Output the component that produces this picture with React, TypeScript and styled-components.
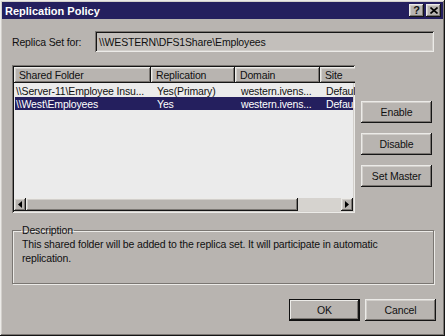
import styled, { createGlobalStyle, css } from "styled-components";

const GlobalStyle = createGlobalStyle`
  html, body {
    margin: 0;
    padding: 0;
    background: #b8b4b0;
  }
  body {
    font-family: "Liberation Sans", Arial, sans-serif;
    font-size: 10.5px;
    letter-spacing: -0.15px;
    color: #101010;
  }
`;

const raised = css`
  box-shadow: inset -1px -1px #151515, inset 1px 1px #ecebe8,
    inset -2px -2px #7a7672, inset 2px 2px #d2cfcb;
`;

const sunken = css`
  box-shadow: inset 1px 1px #7a7672, inset -1px -1px #ecebe8,
    inset 2px 2px #151515, inset -2px -2px #d2cfcb;
`;

const Window = styled.div`
  width: 445px;
  height: 336px;
  box-sizing: border-box;
  padding: 2px;
  background: #b8b4b0;
  display: flex;
  flex-direction: column;
  ${raised};
`;

const TitleBar = styled.div`
  height: 17px;
  background: #241f5e;
  display: flex;
  align-items: center;
  padding: 0 2px 0 3px;
`;

const Title = styled.div`
  flex: 1;
  color: #fff;
  font-weight: bold;
  font-size: 11px;
  letter-spacing: 0;
`;

const CaptionButton = styled.div`
  width: 15px;
  height: 13px;
  margin-left: 2px;
  background: #b8b4b0;
  display: flex;
  align-items: center;
  justify-content: center;
  font-weight: bold;
  font-size: 11px;
  letter-spacing: 0;
  line-height: 1;
  ${raised};
`;

const Body = styled.div`
  flex: 1;
  display: flex;
  flex-direction: column;
  padding: 12px 9px 0 10px;
`;

const FieldRow = styled.div`
  display: flex;
  align-items: center;
  height: 21px;
`;

const Label = styled.div`
  width: 83px;
`;

const ReadOnlyField = styled.div`
  flex: 1;
  height: 21px;
  box-sizing: border-box;
  padding: 0 4px;
  display: flex;
  align-items: center;
  background: #c3bfbb;
  ${sunken};
`;

const Middle = styled.div`
  display: flex;
  margin-top: 13px;
  gap: 6px;
`;

const List = styled.div`
  width: 343px;
  height: 148px;
  box-sizing: border-box;
  padding: 2px;
  background: #ebebeb;
  display: flex;
  flex-direction: column;
  overflow: hidden;
  ${sunken};
`;

const HeaderRow = styled.div`
  display: flex;
  height: 16px;
  flex-shrink: 0;
`;

const HeaderCell = styled.div<{ w: number }>`
  width: ${(p) => p.w}px;
  flex-shrink: 0;
  box-sizing: border-box;
  padding: 0 5px;
  display: flex;
  align-items: center;
  background: #b8b4b0;
  white-space: nowrap;
  overflow: hidden;
  ${raised};
`;

const Rows = styled.div`
  flex: 1;
  padding-top: 1px;
`;

const Row = styled.div<{ selected?: boolean }>`
  display: flex;
  height: 13px;
  align-items: center;
  margin-left: 1px;
  background: ${(p) => (p.selected ? "#241f5e" : "transparent")};
  color: ${(p) => (p.selected ? "#fff" : "#101010")};
`;

const Cell = styled.div<{ w: number; first?: boolean }>`
  width: ${(p) => p.w}px;
  flex-shrink: 0;
  box-sizing: border-box;
  padding: 0 2px 0 ${(p) => (p.first ? 1 : 6)}px;
  white-space: nowrap;
  overflow: hidden;
`;

const ScrollBar = styled.div`
  height: 13px;
  display: flex;
  flex-shrink: 0;
  background: #d6d3cf;
`;

const ArrowButton = styled.div`
  width: 12px;
  height: 13px;
  background: #b8b4b0;
  display: flex;
  align-items: center;
  justify-content: center;
  ${raised};
`;

const Thumb = styled.div`
  width: 272px;
  height: 13px;
  background: #b8b4b0;
  ${raised};
`;

const Track = styled.div`
  flex: 1;
`;

const SideButtons = styled.div`
  display: flex;
  flex-direction: column;
  gap: 10px;
  padding-top: 36px;
`;

const Button = styled.button<{ isDefault?: boolean }>`
  width: 71px;
  height: 22px;
  border: none;
  padding: 0;
  font: inherit;
  letter-spacing: inherit;
  color: #101010;
  background: #b8b4b0;
  ${(p) =>
    p.isDefault
      ? css`
          box-shadow: inset 0 0 0 1px #101010, inset -2px -2px #151515,
            inset 2px 2px #ecebe8, inset -3px -3px #7a7672;
        `
      : raised};
`;

const GroupBox = styled.fieldset`
  margin: 11px 0 0 0;
  height: 60px;
  box-sizing: border-box;
  padding: 0 8px 0 9px;
  border: 1px solid #7a7672;
  box-shadow: 1px 1px #ecebe8, inset 1px 1px #ecebe8;
`;

const Legend = styled.legend`
  padding: 0 1px;
  margin-left: -1px;
`;

const Description = styled.p`
  margin: 1px 0 0 0;
  width: 360px;
  line-height: 14px;
`;

const Footer = styled.div`
  display: flex;
  justify-content: flex-end;
  gap: 5px;
  margin-top: 15px;
  margin-right: -2px;
`;

const columns = [137, 84, 85, 60];

const data = [
  ["\\\\Server-11\\Employee Insu...", "Yes(Primary)", "western.ivens...", "Default"],
  ["\\\\West\\Employees", "Yes", "western.ivens...", "Default"],
];

export default function App() {
  return (
    <>
      <GlobalStyle />
      <Window>
        <TitleBar>
          <Title>Replication Policy</Title>
          <CaptionButton>?</CaptionButton>
          <CaptionButton>
            <svg width="8" height="7" viewBox="0 0 8 7">
              <path d="M0.5 0.5 L7.5 6.5 M7.5 0.5 L0.5 6.5" stroke="#000" strokeWidth="1.6" />
            </svg>
          </CaptionButton>
        </TitleBar>
        <Body>
          <FieldRow>
            <Label>Replica Set for:</Label>
            <ReadOnlyField>\\WESTERN\DFS1Share\Employees</ReadOnlyField>
          </FieldRow>
          <Middle>
            <List>
              <HeaderRow>
                <HeaderCell w={columns[0]}>Shared Folder</HeaderCell>
                <HeaderCell w={columns[1]}>Replication</HeaderCell>
                <HeaderCell w={columns[2]}>Domain</HeaderCell>
                <HeaderCell w={columns[3]}>Site</HeaderCell>
              </HeaderRow>
              <Rows>
                {data.map((r, i) => (
                  <Row key={i} selected={i === 1}>
                    {r.map((c, j) => (
                      <Cell key={j} first={j === 0} w={j === 0 ? 136 : columns[j]}>
                        {c}
                      </Cell>
                    ))}
                  </Row>
                ))}
              </Rows>
              <ScrollBar>
                <ArrowButton>
                  <svg width="4" height="7" viewBox="0 0 4 7">
                    <path d="M4 0 L0 3.5 L4 7 Z" fill="#000" />
                  </svg>
                </ArrowButton>
                <Thumb />
                <Track />
                <ArrowButton>
                  <svg width="4" height="7" viewBox="0 0 4 7">
                    <path d="M0 0 L4 3.5 L0 7 Z" fill="#000" />
                  </svg>
                </ArrowButton>
              </ScrollBar>
            </List>
            <SideButtons>
              <Button>Enable</Button>
              <Button>Disable</Button>
              <Button>Set Master</Button>
            </SideButtons>
          </Middle>
          <GroupBox>
            <Legend>Description</Legend>
            <Description>
              This shared folder will be added to the replica set. It will participate in automatic
              replication.
            </Description>
          </GroupBox>
          <Footer>
            <Button isDefault>OK</Button>
            <Button>Cancel</Button>
          </Footer>
        </Body>
      </Window>
    </>
  );
}
